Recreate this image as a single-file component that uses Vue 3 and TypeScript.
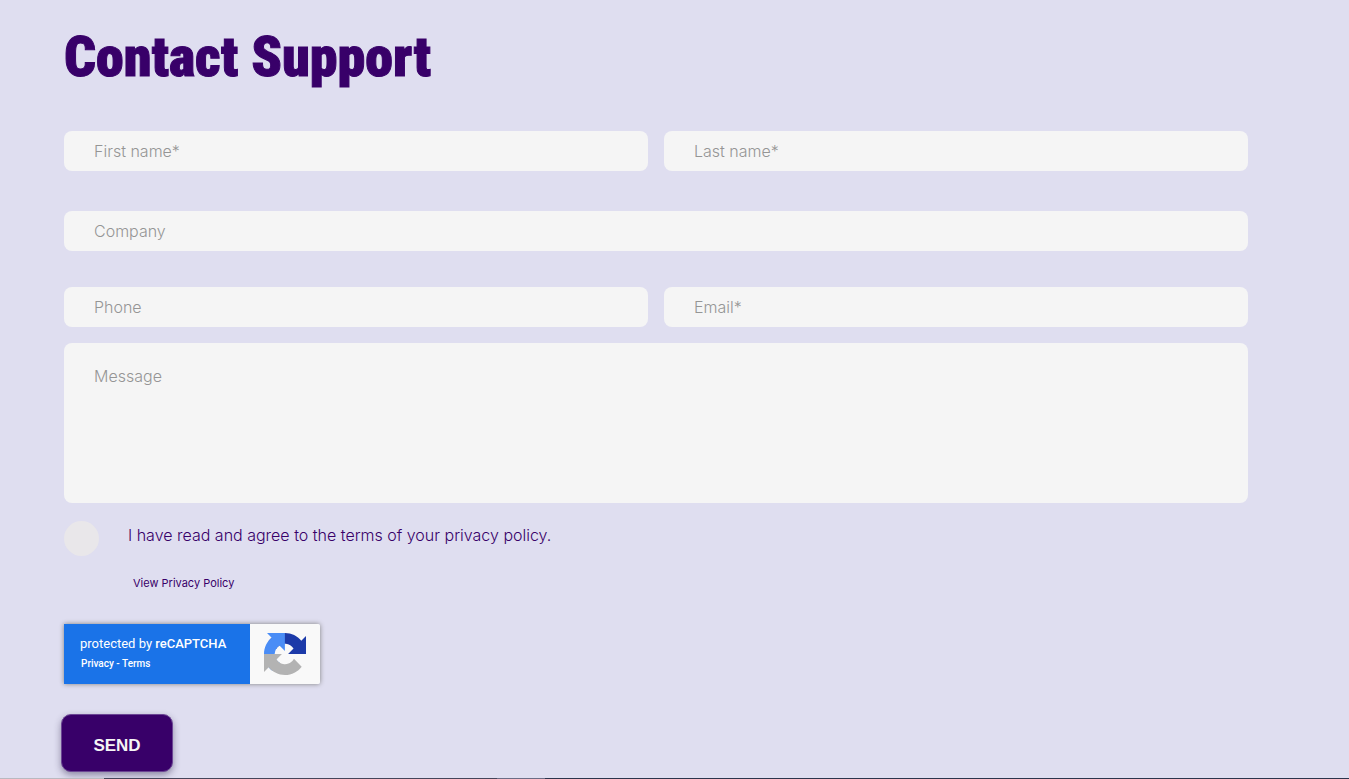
<script setup lang="ts">
import { reactive } from 'vue'

const form = reactive({
  firstName: '',
  lastName: '',
  company: '',
  phone: '',
  email: '',
  message: '',
  agreed: false,
})
</script>

<template>
  <main class="page">
    <h1 class="title">Contact Support</h1>

    <form class="form" @submit.prevent>
      <div class="row names">
        <input v-model="form.firstName" class="field" type="text" placeholder="First name*" aria-label="First name" />
        <input v-model="form.lastName" class="field" type="text" placeholder="Last name*" aria-label="Last name" />
      </div>
      <div class="row company">
        <input v-model="form.company" class="field" type="text" placeholder="Company" aria-label="Company" />
      </div>
      <div class="row contact">
        <input v-model="form.phone" class="field" type="tel" placeholder="Phone" aria-label="Phone" />
        <input v-model="form.email" class="field" type="email" placeholder="Email*" aria-label="Email" />
      </div>
      <textarea v-model="form.message" class="field message" placeholder="Message" aria-label="Message"></textarea>

      <div class="consent">
        <input id="agree" v-model="form.agreed" class="tick" type="checkbox" />
        <div class="consent-text">
          <label for="agree">I have read and agree to the terms of your privacy policy.</label>
          <a class="policy" href="#privacy-policy">View Privacy Policy</a>
        </div>
      </div>

      <div class="captcha">
        <div class="captcha-text">
          <span class="captcha-name">protected by <strong>reCAPTCHA</strong></span>
          <span class="captcha-links"><a href="#privacy">Privacy</a> - <a href="#terms">Terms</a></span>
        </div>
        <div class="captcha-logo">
          <svg viewBox="0 0 64 64" width="42" height="42" aria-hidden="true">
            <path fill="#1c3aa9" d="M64 31.955l-.033-1.37V4.687l-7.16 7.16C50.948 4.674 42.033.093 32.05.093c-10.4 0-19.622 4.96-25.458 12.64l11.736 11.86a15.55 15.55 0 0 1 4.754-5.334c2.05-1.6 4.952-2.906 8.968-2.906.485 0 .86.057 1.135.163 4.976.393 9.288 3.14 11.828 7.124l-8.307 8.307L64 31.953" />
            <path fill="#4a8df6" d="M31.862.094l-1.37.033H4.594l7.16 7.16C4.58 13.147 0 22.06 0 32.046c0 10.4 4.96 19.622 12.64 25.458L24.5 45.768a15.55 15.55 0 0 1-5.334-4.754c-1.6-2.05-2.906-4.952-2.906-8.968 0-.485.057-.86.163-1.135.393-4.976 3.14-9.288 7.124-11.828l8.307 8.307L31.86.095" />
            <path fill="#b3b3b3" d="M.001 32.045l.033 1.37v25.898l7.16-7.16c5.86 7.173 14.774 11.754 24.76 11.754 10.4 0 19.622-4.96 25.458-12.64l-11.736-11.86a15.55 15.55 0 0 1-4.754 5.334c-2.05 1.6-4.952 2.906-8.968 2.906-.485 0-.86-.057-1.135-.163-4.976-.393-9.288-3.14-11.828-7.124l8.307-8.307c-10.522.04-22.4.066-27.295-.005" />
          </svg>
        </div>
      </div>

      <button class="send" type="submit">SEND</button>
    </form>

    <div class="edge"></div>
  </main>
</template>

<style>
body {
  margin: 0;
  background: #dfdef0;
}
</style>

<style scoped>
.page {
  box-sizing: border-box;
  min-height: 100vh;
  display: flex;
  flex-direction: column;
  background: #dfdef0;
  color: #380069;
  font-family: Inter, "Liberation Sans", sans-serif;
}

.title {
  margin: 0 64px;
  padding-top: 25px;
  font-family: "Roboto Condensed", "Liberation Sans Narrow", Roboto, sans-serif;
  font-size: 56px;
  line-height: 64px;
  font-weight: 900;
  -webkit-text-stroke: 1px #380069;
}

.form {
  margin: 42px 101px 0 64px;
}

.row {
  display: flex;
  gap: 16px;
}

.names {
  margin-bottom: 40px;
}

.company {
  margin-bottom: 36px;
}

.contact {
  margin-bottom: 16px;
}

.field {
  box-sizing: border-box;
  flex: 1;
  min-width: 0;
  height: 40px;
  padding: 0 30px;
  border: 0;
  border-radius: 8px;
  background: #f5f5f5;
  color: #380069;
  font-family: inherit;
  font-size: 16px;
  font-weight: 300;
}

.field::placeholder {
  color: #959595;
  opacity: 1;
}

.message {
  display: block;
  width: 100%;
  height: 160px;
  padding-top: 23px;
  line-height: 20px;
  resize: none;
}

.consent {
  display: flex;
  gap: 29px;
  margin-top: 18px;
}

.tick {
  appearance: none;
  flex: none;
  width: 35px;
  height: 35px;
  margin: 0;
  border-radius: 50%;
  background: #e9e7ea;
}

.tick:checked {
  background: #380069;
}

.consent-text {
  display: flex;
  flex-direction: column;
  align-items: flex-start;
  padding-top: 2px;
  font-size: 16px;
  line-height: 24px;
  font-weight: 300;
}

.policy {
  margin: 28px 0 0 5px;
  color: #380069;
  font-size: 11px;
  line-height: 16px;
  font-weight: 400;
  text-decoration: none;
}

.captcha {
  display: flex;
  width: 256px;
  height: 60px;
  margin-top: 33px;
  border-radius: 0 2px 2px 0;
  overflow: hidden;
  box-shadow: 0 0 5px #808080;
  font-family: Roboto, sans-serif;
}

.captcha-text {
  box-sizing: border-box;
  display: flex;
  flex: 1;
  flex-direction: column;
  padding: 10px 0 0 16px;
  background: #1a73e8;
  color: #fff;
}

.captcha-name {
  font-size: 13px;
  line-height: 20px;
}

.captcha-name strong {
  font-weight: 500;
}

.captcha-links {
  padding-left: 1px;
  font-size: 10px;
  line-height: 20px;
  font-weight: 500;
}

.captcha-links a {
  color: #fff;
  text-decoration: none;
}

.captcha-logo {
  display: flex;
  align-items: center;
  justify-content: center;
  width: 70px;
  background: #f9f9f9;
}

.send {
  display: block;
  width: 112px;
  height: 58px;
  margin: 30px 0 0 -3px;
  padding: 5px 0 0;
  border: 1px solid #6b4594;
  border-radius: 10px;
  background: #380069;
  color: #f5f5f5;
  box-shadow: 0 3px 7px rgba(40, 30, 70, 0.45);
  font-family: "Liberation Sans", sans-serif;
  font-size: 17px;
  font-weight: 700;
}

.edge {
  height: 1px;
  margin-top: auto;
  background: linear-gradient(90deg, #b9b9c0 0 104px, #45455a 104px 497px, #6c6c85 497px 545px, #2c344c 545px);
}
</style>
